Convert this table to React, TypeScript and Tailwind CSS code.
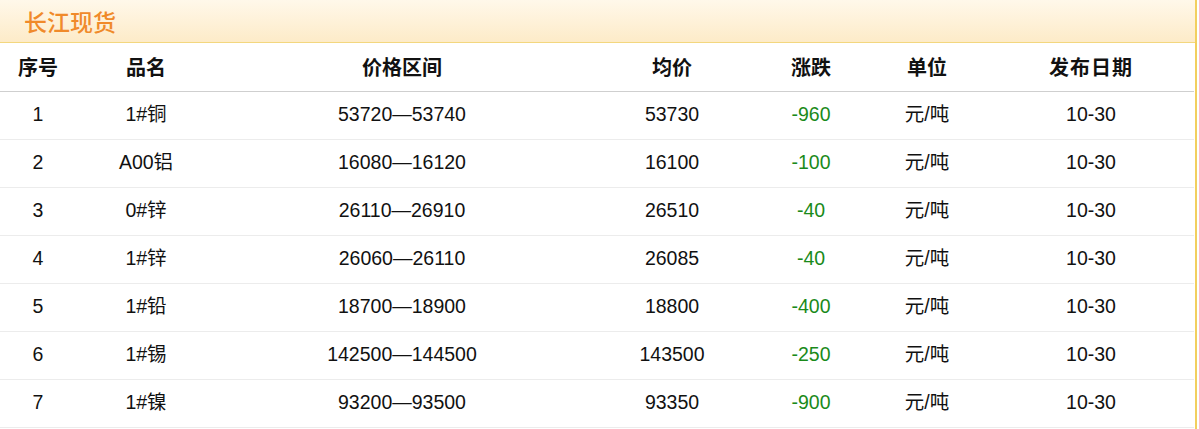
const rows = [
  ["1", "1#铜", "53720—53740", "53730", "-960"],
  ["2", "A00铝", "16080—16120", "16100", "-100"],
  ["3", "0#锌", "26110—26910", "26510", "-40"],
  ["4", "1#锌", "26060—26110", "26085", "-40"],
  ["5", "1#铅", "18700—18900", "18800", "-400"],
  ["6", "1#锡", "142500—144500", "143500", "-250"],
  ["7", "1#镍", "93200—93500", "93350", "-900"],
];

const heads = ["序号", "品名", "价格区间", "均价", "涨跌", "单位", "发布日期"];
const widths = ["w-[76px]", "w-[140px]", "w-[372px]", "w-[168px]", "w-[110px]", "w-[122px]", "w-[206px]"];

export default function App() {
  return (
    <div className="w-[1199px] h-[429px] bg-white overflow-hidden font-['Liberation_Sans','Noto_Sans_CJK_SC',sans-serif]">
      <div className="w-[1197px] border-r-2 border-[#f2cf5e] h-full">
        <div className="h-[43px] bg-gradient-to-b from-[#fff8ea] to-[#fdebc8] border-b border-[#f3d77e] flex items-center pl-[24px]">
          <span className="text-[23px] font-medium text-[#f08a2a] font-['Noto_Sans_CJK_SC',sans-serif] leading-none">长江现货</span>
        </div>
        <table className="w-[1194px] table-fixed border-collapse">
          <thead>
            <tr className="h-[48px] border-b border-[#cfcfcf]">
              {heads.map((h, i) => (
                <th key={h} className={`${widths[i]} text-center text-[20px] font-bold text-[#111] font-['Noto_Sans_CJK_SC',sans-serif] ${i === 6 ? "tracking-[1px]" : ""}`}>
                  {h}
                </th>
              ))}
            </tr>
          </thead>
          <tbody>
            {rows.map((r) => (
              <tr key={r[0]} className="h-[48px] border-b border-[#ececec] text-[19.5px] text-[#111]">
                <td className="text-center">{r[0]}</td>
                <td className="text-center">{r[1]}</td>
                <td className="text-center">{r[2]}</td>
                <td className="text-center">{r[3]}</td>
                <td className="text-center text-[#1a8a1a]">{r[4]}</td>
                <td className="text-center">元/吨</td>
                <td className="text-center">10-30</td>
              </tr>
            ))}
          </tbody>
        </table>
      </div>
    </div>
  );
}
